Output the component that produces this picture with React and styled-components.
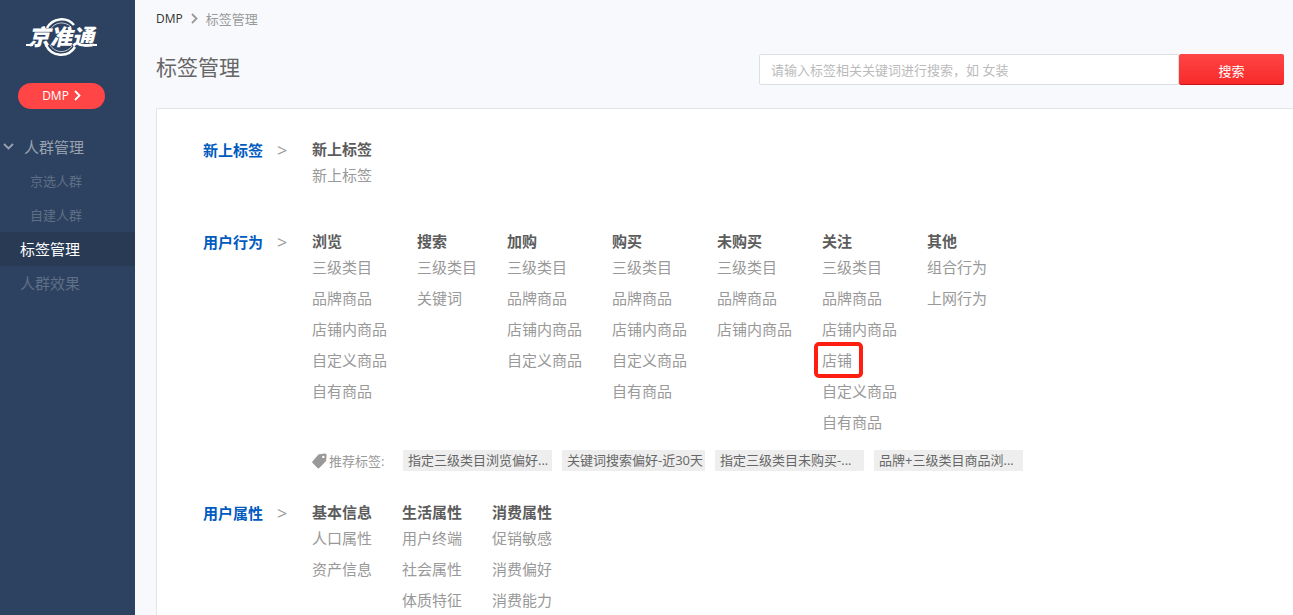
import React, { Component } from 'react';
import styled, { createGlobalStyle } from 'styled-components';

const GlobalStyle = createGlobalStyle`
  * {
    box-sizing: border-box;
  }

  body {
    margin: 0;
    background-color: #f7f9fc;
    font-family: 'Open Sans', 'Noto Sans CJK SC', sans-serif;
    font-size: 13px;
    color: #666666;
  }

  h1, h2, h3, ul, ol {
    margin: 0;
    padding: 0;
  }

  ul, ol {
    list-style: none;
  }

  a {
    color: inherit;
    text-decoration: none;
  }
`;

const StyledLayout = styled.div`
  display: flex;
  height: 100vh;
`;

const StyledSidebar = styled.aside`
  flex: 0 0 135px;
  background-color: #2d4260;
`;

const StyledLogo = styled.svg`
  display: block;
  width: 80px;
  height: 40px;
  margin: 17px 0 26px 22px;
`;

const StyledProductButton = styled.button`
  display: flex;
  align-items: center;
  justify-content: center;
  gap: 5px;
  width: 87px;
  height: 26px;
  margin: 0 0 21px 18px;
  padding: 0 0 2px;
  border: none;
  border-radius: 13px;
  background-color: #ff4545;
  color: #ffffff;
  font-family: inherit;
  font-size: 12px;
`;

const StyledMenuLink = styled.a`
  display: flex;
  align-items: center;
  height: 34px;
  padding-bottom: 2px;
  padding-left: ${props => props.$indent}px;
  background-color: ${props => (props.$active ? '#293b54' : 'transparent')};
  color: ${props => (props.$active ? '#ffffff' : '#5f6f87')};
  font-size: ${props => (props.$small ? 13 : 15)}px;
`;

const StyledGroupButton = styled.button`
  display: flex;
  align-items: center;
  gap: 10px;
  width: 100%;
  height: 34px;
  padding: 0 0 2px 3px;
  border: none;
  background: none;
  color: #98a1af;
  font-family: inherit;
  font-size: 15px;
`;

const StyledMain = styled.main`
  flex: 1;
  min-width: 0;
  display: flex;
  flex-direction: column;
  padding-left: 21px;
  overflow: auto;
  scrollbar-width: none;
`;

const StyledBreadcrumb = styled.nav`
  display: flex;
  flex-shrink: 0;
  align-items: center;
  gap: 8px;
  height: 36px;
  color: #999999;

  a {
    color: #333333;
    font-size: 12px;
  }
`;

const StyledPageHeader = styled.header`
  display: flex;
  align-items: flex-start;
  justify-content: space-between;
  padding: 18px 9px 23px 0;
`;

const StyledTitle = styled.h1`
  font-size: 21px;
  font-weight: 400;
  line-height: 26px;
`;

const StyledSearch = styled.form`
  display: flex;
  flex: 0 1 525px;
  height: 31px;
`;

const StyledSearchInput = styled.input`
  flex: 1;
  min-width: 0;
  padding: 0 11px;
  border: 1px solid #dddfe2;
  border-radius: 2px;
  background-color: #ffffff;
  font-family: inherit;
  font-size: 13px;
  color: #666666;

  &::placeholder {
    color: #bbbbbb;
    opacity: 1;
  }
`;

const StyledSearchButton = styled.button`
  width: 105px;
  padding: 2px 0 0;
  border: none;
  border-bottom: 1px solid #c81414;
  border-radius: 2px;
  background-image: linear-gradient(#ff4545, #f82a2a);
  color: #ffffff;
  font-family: inherit;
  font-size: 13px;
`;

const StyledPanel = styled.div`
  flex: 1 0 auto;
  padding: 30px 46px 0;
  border: solid #e3e5e8;
  border-width: 1px 0 0 1px;
  background-color: #ffffff;
`;

const StyledSection = styled.section`
  display: flex;
  min-height: 61px;
  margin-bottom: 31px;
`;

const StyledCategory = styled.h2`
  display: flex;
  flex: 0 0 109px;
  gap: 14px;
  color: #005bbf;
  font-size: 15px;
  font-weight: 700;
  line-height: 22px;
`;

const StyledCategoryArrow = styled.span`
  color: #999999;
  font-size: 18px;
  font-weight: 400;
`;

const StyledColumns = styled.div`
  display: flex;
  gap: 30px;
`;

const StyledColumnTitle = styled.h3`
  color: #5c5c5c;
  font-size: 15px;
  font-weight: 700;
  line-height: 21px;
`;

const StyledItem = styled.li`
  color: #999999;
  font-size: 15px;
  line-height: 31px;
`;

const StyledMarkedLink = styled.a`
  position: relative;
  display: inline-block;

  &::after {
    content: '';
    position: absolute;
    top: -3px;
    right: -11px;
    bottom: -2px;
    left: -8px;
    border: 4px solid #ff1e0f;
    border-radius: 5px;
  }
`;

const StyledRecommend = styled.div`
  display: flex;
  align-items: center;
  gap: 10px;
  margin-top: 12px;
`;

const StyledRecommendLabel = styled.div`
  display: flex;
  flex: 0 0 81px;
  align-items: center;
  gap: 2px;
  color: #999999;
`;

const StyledTag = styled.a`
  width: ${props => (props.$clipped ? '149px' : 'auto')};
  padding: 0 2px 0 5px;
  overflow: hidden;
  background-color: #eeeeee;
  color: #666666;
  line-height: 21px;
  white-space: nowrap;
`;

const sections = [
  {
    name: '新上标签',
    columns: [{ title: '新上标签', items: ['新上标签'] }]
  },
  {
    name: '用户行为',
    columns: [
      { title: '浏览', items: ['三级类目', '品牌商品', '店铺内商品', '自定义商品', '自有商品'] },
      { title: '搜索', items: ['三级类目', '关键词'] },
      { title: '加购', items: ['三级类目', '品牌商品', '店铺内商品', '自定义商品'] },
      { title: '购买', items: ['三级类目', '品牌商品', '店铺内商品', '自定义商品', '自有商品'] },
      { title: '未购买', items: ['三级类目', '品牌商品', '店铺内商品'] },
      {
        title: '关注',
        marked: '店铺',
        items: ['三级类目', '品牌商品', '店铺内商品', '店铺', '自定义商品', '自有商品']
      },
      { title: '其他', items: ['组合行为', '上网行为'] }
    ],
    recommended: [
      '指定三级类目浏览偏好...',
      '关键词搜索偏好-近30天',
      '指定三级类目未购买-...',
      '品牌+三级类目商品浏...'
    ]
  },
  {
    name: '用户属性',
    columns: [
      { title: '基本信息', items: ['人口属性', '资产信息'] },
      { title: '生活属性', items: ['用户终端', '社会属性', '体质特征'] },
      { title: '消费属性', items: ['促销敏感', '消费偏好', '消费能力'] }
    ]
  }
];

const Chevron = ({ down }) => (
  <svg
    width={down ? 11 : 7}
    height={down ? 7 : 11}
    viewBox={down ? '0 0 11 7' : '0 0 7 11'}
    fill="none"
    stroke="currentColor"
    strokeWidth="1.8"
    aria-hidden="true"
  >
    <path d={down ? 'M1 1L5.5 5.5L10 1' : 'M1 1L5.5 5.5L1 10'} />
  </svg>
);

const TagIcon = () => (
  <svg width="15" height="16" viewBox="0 0 15 16" aria-hidden="true">
    <path
      fill="#999999"
      fillRule="evenodd"
      d="M7.2 1.2L13 .4Q14.6.3 14.6 2L14.2 7.3Q14.1 8 13.6 8.6L7.3 15Q6.4 15.8 5.5 15L.6 10.1Q-.2 9.2.6 8.3L6 1.9Q6.5 1.3 7.2 1.2ZM11.3 2.7A1.2 1.2 0 1 0 11.3 5.1A1.2 1.2 0 1 0 11.3 2.7Z"
    />
  </svg>
);

const Logo = () => (
  <StyledLogo viewBox="0 0 80 40" role="img" aria-label="京准通">
    <g fill="none" stroke="#ffffff">
      <path d="M25 11A16.5 16.5 0 0 1 52 8" strokeWidth="2.5" />
      <path d="M28 13A13 13 0 0 1 49 10" strokeWidth="1" opacity=".7" />
      <path d="M24 28A16.5 16.5 0 0 0 53 30" strokeWidth="2.5" />
      <path d="M28 28A13 13 0 0 0 50 29" strokeWidth="1" opacity=".7" />
      <path d="M4 28H11M71 28H75" strokeWidth="2" />
    </g>
    <text
      x="6"
      y="28"
      fill="#ffffff"
      fontFamily="'Noto Sans CJK SC', sans-serif"
      fontSize="22"
      fontStyle="italic"
      fontWeight="900"
    >
      京准通
    </text>
  </StyledLogo>
);

const Column = ({ title, items, marked }) => (
  <div>
    <StyledColumnTitle>{title}</StyledColumnTitle>
    <ul>
      {items.map(item => (
        <StyledItem key={item}>
          {item === marked
            ? <StyledMarkedLink href="#">{item}</StyledMarkedLink>
            : <a href="#">{item}</a>}
        </StyledItem>
      ))}
    </ul>
  </div>
);

const Section = ({ name, columns, recommended }) => (
  <StyledSection>
    <StyledCategory>
      {name}
      <StyledCategoryArrow>&gt;</StyledCategoryArrow>
    </StyledCategory>
    <div>
      <StyledColumns>
        {columns.map(column => <Column key={column.title} {...column} />)}
      </StyledColumns>
      {recommended && (
        <StyledRecommend>
          <StyledRecommendLabel>
            <TagIcon />
            推荐标签:
          </StyledRecommendLabel>
          {recommended.map(tag => (
            <StyledTag key={tag} href="#" $clipped={tag.endsWith('...')}>{tag}</StyledTag>
          ))}
        </StyledRecommend>
      )}
    </div>
  </StyledSection>
);

class App extends Component {
  state = {
    keyword: ''
  }

  onChangeKeyword = (e) => {
    this.setState({ keyword: e.target.value });
  }

  onSearch = (e) => {
    e.preventDefault();
  }

  render() {
    const { keyword } = this.state;

    return (
      <StyledLayout lang="zh-CN">
        <GlobalStyle />
        <StyledSidebar>
          <Logo />
          <StyledProductButton type="button">
            DMP
            <Chevron />
          </StyledProductButton>
          <nav>
            <StyledGroupButton type="button">
              <Chevron down />
              人群管理
            </StyledGroupButton>
            <StyledMenuLink href="#" $indent={30} $small>京选人群</StyledMenuLink>
            <StyledMenuLink href="#" $indent={30} $small>自建人群</StyledMenuLink>
            <StyledMenuLink href="#" $indent={20} $active>标签管理</StyledMenuLink>
            <StyledMenuLink href="#" $indent={20}>人群效果</StyledMenuLink>
          </nav>
        </StyledSidebar>
        <StyledMain>
          <StyledBreadcrumb>
            <a href="#">DMP</a>
            <Chevron />
            <span>标签管理</span>
          </StyledBreadcrumb>
          <StyledPageHeader>
            <StyledTitle>标签管理</StyledTitle>
            <StyledSearch onSubmit={this.onSearch}>
              <StyledSearchInput
                type="text"
                aria-label="搜索标签"
                placeholder="请输入标签相关关键词进行搜索，如 女装"
                value={keyword}
                onChange={this.onChangeKeyword}
              />
              <StyledSearchButton type="submit">搜索</StyledSearchButton>
            </StyledSearch>
          </StyledPageHeader>
          <StyledPanel>
            {sections.map(section => <Section key={section.name} {...section} />)}
          </StyledPanel>
        </StyledMain>
      </StyledLayout>
    );
  }
}

export default App;
